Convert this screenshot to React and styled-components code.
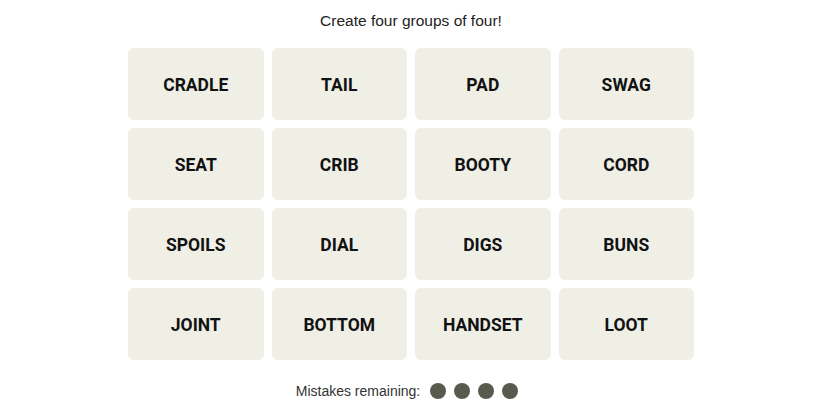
import React from "react";
import styled, { createGlobalStyle } from "styled-components";

const Global = createGlobalStyle`
  html, body { margin: 0; padding: 0; background: #ffffff; }
  body { font-family: "Liberation Sans", Arial, sans-serif; }
`;

const Page = styled.div`
  width: 822px;
  display: flex;
  flex-direction: column;
  align-items: center;
  padding-top: 11px;
`;

const Title = styled.p`
  margin: 0;
  font-size: 15.5px;
  line-height: 20px;
  color: #222;
`;

const Grid = styled.div`
  margin-top: 17px;
  width: 566px;
  display: grid;
  grid-template-columns: repeat(4, 1fr);
  grid-auto-rows: 72px;
  gap: 8px;
`;

const Tile = styled.div`
  background: #efefe6;
  border-radius: 6px;
  display: flex;
  align-items: center;
  justify-content: center;
  padding-top: 2px;
  font-family: Roboto, "Liberation Sans", sans-serif;
  font-weight: 700;
  font-size: 17.5px;
  color: #121212;
  text-transform: uppercase;
`;

const Footer = styled.div`
  margin-top: 22px;
  margin-right: 8px;
  display: flex;
  align-items: center;
  gap: 10px;
  font-size: 14px;
  color: #333;
`;

const Dots = styled.div`
  display: flex;
  gap: 8px;
  padding-top: 1px;
`;

const Dot = styled.span`
  width: 16px;
  height: 16px;
  border-radius: 50%;
  background: #5a594e;
`;

const words = [
  "CRADLE", "TAIL", "PAD", "SWAG",
  "SEAT", "CRIB", "BOOTY", "CORD",
  "SPOILS", "DIAL", "DIGS", "BUNS",
  "JOINT", "BOTTOM", "HANDSET", "LOOT",
];

export default function App() {
  return (
    <>
      <Global />
      <Page>
        <Title>Create four groups of four!</Title>
        <Grid>
          {words.map((w) => (
            <Tile key={w}>{w}</Tile>
          ))}
        </Grid>
        <Footer>
          Mistakes remaining:
          <Dots>
            {[0, 1, 2, 3].map((i) => (
              <Dot key={i} />
            ))}
          </Dots>
        </Footer>
      </Page>
    </>
  );
}
